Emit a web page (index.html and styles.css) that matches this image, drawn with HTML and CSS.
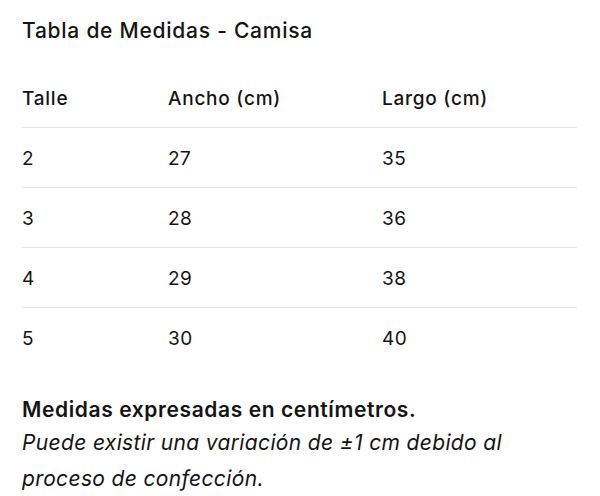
FILE: index.html
```html
<!DOCTYPE html>
<html lang="es">
<head>
<meta charset="utf-8">
<title>Tabla de Medidas - Camisa</title>
<link rel="stylesheet" href="styles.css">
</head>
<body>
<div class="wrap">
  <h1 class="title">Tabla de Medidas - Camisa</h1>
  <table class="sizes">
    <thead>
      <tr>
        <th class="c-talle">Talle</th>
        <th class="c-ancho">Ancho (cm)</th>
        <th class="c-largo">Largo (cm)</th>
      </tr>
    </thead>
    <tbody>
      <tr><td>2</td><td>27</td><td>35</td></tr>
      <tr><td>3</td><td>28</td><td>36</td></tr>
      <tr><td>4</td><td>29</td><td>38</td></tr>
      <tr><td>5</td><td>30</td><td>40</td></tr>
    </tbody>
  </table>
  <p class="note-main">Medidas expresadas en centímetros.</p>
  <p class="note-sub">Puede existir una variación de ±1 cm debido al proceso de confección.</p>
</div>
</body>
</html>
```
FILE: styles.css
```css
html, body {
  margin: 0;
  padding: 0;
  background: #ffffff;
}
body {
  font-family: Inter, "Noto Sans", "Liberation Sans", sans-serif;
  color: #141414;
}
.wrap {
  padding: 19px 23px 0 22px;
}
.title {
  margin: 0;
  font-size: 21px;
  line-height: 24px;
  font-weight: 500;
  letter-spacing: 0.75px;
}
.sizes {
  margin-top: 25px;
  width: 555px;
  border-collapse: separate;
  border-spacing: 0;
  table-layout: fixed;
}
.sizes th,
.sizes td {
  padding: 20px 0 18px;
  line-height: 21px;
  font-size: 19px;
  text-align: left;
  border-bottom: 1px solid #e6e6e6;
}
.sizes th {
  font-weight: 500;
  letter-spacing: 0.75px;
}
.sizes td {
  font-weight: 400;
  letter-spacing: 0.5px;
}
.sizes tbody tr:last-child td {
  border-bottom: none;
}
.c-talle { width: 146px; }
.c-ancho { width: 214px; }
.c-largo { width: 195px; }
.note-main {
  margin: 29px 0 0;
  font-size: 21px;
  line-height: 28px;
  font-weight: 600;
  letter-spacing: 0.6px;
}
.note-sub {
  margin: 1px 0 0;
  width: 510px;
  font-size: 21px;
  line-height: 36px;
  font-style: italic;
  font-weight: 400;
  letter-spacing: 0.35px;
}
```
